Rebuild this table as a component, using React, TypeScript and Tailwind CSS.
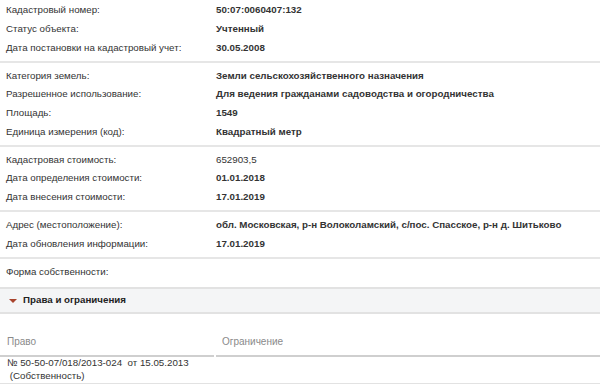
import React from "react";

type Row = [string, string, boolean?];

const groups: Row[][] = [
  [
    ["Кадастровый номер:", "50:07:0060407:132", true],
    ["Статус объекта:", "Учтенный", true],
    ["Дата постановки на кадастровый учет:", "30.05.2008", true],
  ],
  [
    ["Категория земель:", "Земли сельскохозяйственного назначения", true],
    ["Разрешенное использование:", "Для ведения гражданами садоводства и огородничества", true],
    ["Площадь:", "1549", true],
    ["Единица измерения (код):", "Квадратный метр", true],
  ],
  [
    ["Кадастровая стоимость:", "652903,5", false],
    ["Дата определения стоимости:", "01.01.2018", true],
    ["Дата внесения стоимости:", "17.01.2019", true],
  ],
  [
    ["Адрес (местоположение):", "обл. Московская, р-н Волоколамский, с/пос. Спасское, р-н д. Шитьково", true],
    ["Дата обновления информации:", "17.01.2019", true],
  ],
  [["Форма собственности:", "", false]],
];

export default function App() {
  return (
    <div
      className="w-[600px] h-[385px] overflow-hidden bg-white text-[9.75px] text-[#333]"
      style={{ fontFamily: '"Liberation Sans", Arial, sans-serif' }}
    >
      <div className="pt-[1.5px]">
        {groups.map((g, gi) => (
          <div
            key={gi}
            className={`${gi > 0 ? "pt-[3.5px]" : ""} ${gi < groups.length - 1 ? "pb-[4px] border-b-2 border-[#e6e6e6]" : "pb-[6px]"}`}
          >
            {g.map(([label, value, bold], ri) => (
              <div key={ri} className="flex h-[18.6px] items-center whitespace-nowrap">
                <div className="w-[216px] pl-[6px] shrink-0">{label}</div>
                <div className={bold ? "font-bold" : ""}>{value}</div>
              </div>
            ))}
          </div>
        ))}
      </div>
      <div className="flex items-center h-[27px] bg-[#f4f5f6] border-y-2 border-[#e2e2e2]">
        <svg width="8" height="6" viewBox="0 0 8 6" className="ml-[9px] mr-[6px]">
          <polygon points="0,1 8,1 4,5" fill="#a8432c" />
        </svg>
        <span className="font-bold text-[#222] text-[9.75px]">Права и ограничения</span>
      </div>
      <div className="pt-[22px]">
        <div className="flex text-[10px] text-[#8a8a8a] leading-[12px]">
          <div className="w-[214px] pl-[7px] pb-[7px] border-b-2 border-[#cfcfcf]">Право</div>
          <div className="w-[2px]" />
          <div className="flex-1 pl-[6px] pb-[7px] border-b-2 border-[#cfcfcf]">Ограничение</div>
        </div>
        <div className="pl-[7px] leading-[12.5px] pb-[1px] border-b border-[#e2e2e2]">
          <div>№ 50-50-07/018/2013-024&nbsp;&nbsp;от 15.05.2013</div>
          <div>&nbsp;(Собственность)</div>
        </div>
      </div>
    </div>
  );
}
